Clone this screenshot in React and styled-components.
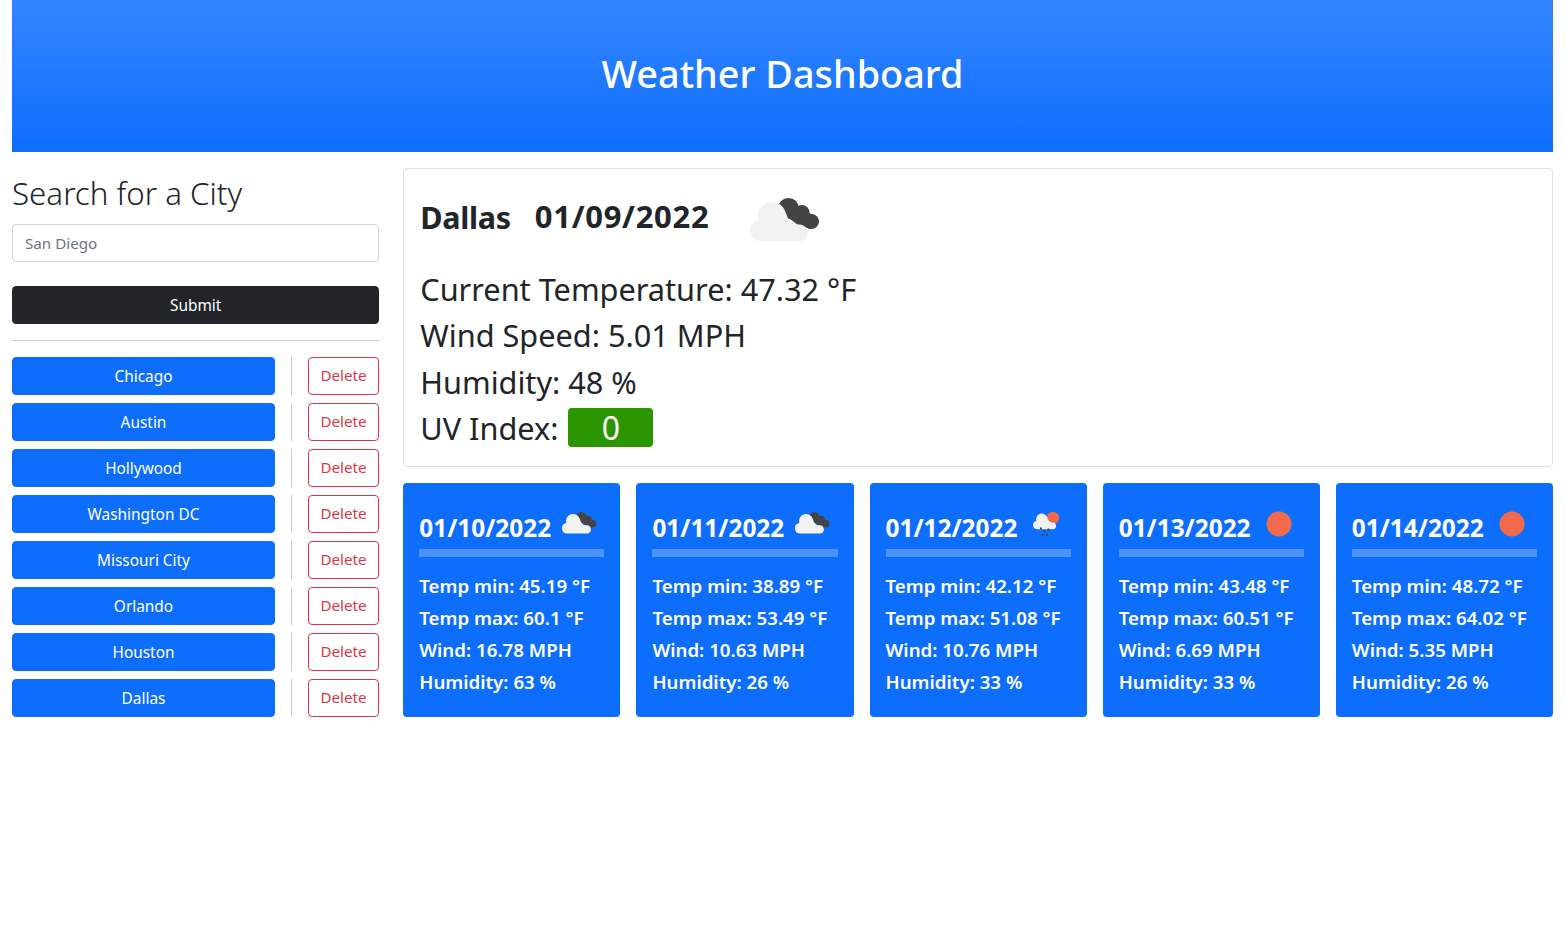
import React from "react";
import styled, { createGlobalStyle } from "styled-components";

const Global = createGlobalStyle`
  html, body { margin: 0; padding: 0; background: #fff; }
  body { font-family: "Noto Sans", "Open Sans", sans-serif; color: #212529; font-size: 16px; line-height: 1.5; }
  * { box-sizing: border-box; }
`;
const Page = styled.div`
  padding: 0 12px;
`;
const Header = styled.header`
  height: 152px;
  display: flex;
  align-items: center;
  justify-content: center;
  background: linear-gradient(#3385ff, #0d6efd);
  color: #fff;
`;
const Title = styled.h1`
  margin: 0 0 4px;
  font-size: 37.8px;
  font-weight: 500;
  line-height: 1.2;
`;
const Columns = styled.div`
  display: grid;
  grid-template-columns: 367.25px 1fr;
  gap: 24px;
  margin-top: 16px;
`;
const Sidebar = styled.aside`
  display: flex;
  flex-direction: column;
`;
const SearchTitle = styled.h2`
  margin: 0 0 16px;
  padding-top: 5px;
  font-size: 31.3px;
  font-weight: 300;
  line-height: 40px;
  height: 40px;
`;
const CityInput = styled.input`
  height: 38px;
  width: 100%;
  border: 1px solid #ced4da;
  border-radius: 4px;
  padding: 6px 12px;
  font: inherit;
  font-size: 15.2px;
  &::placeholder { color: #6c757d; opacity: 1; }
`;
const SubmitButton = styled.button`
  height: 38px;
  margin-top: 24px;
  padding: 2px 0 0;
  border: 1px solid #212529;
  border-radius: 4px;
  background: #212529;
  color: #fff;
  font: inherit;
  font-size: 15.4px;
`;
const Rule = styled.hr`
  width: 100%;
  margin: 16px 0;
  border: 0;
  border-top: 1px solid #c8c9ca;
`;
const CityList = styled.ul`
  list-style: none;
  margin: 0;
  padding: 0;
  display: flex;
  flex-direction: column;
  gap: 8px;
`;
const CityRow = styled.li`
  display: grid;
  grid-template-columns: 263px 1px 71px;
  column-gap: 16px;
`;
const CityButton = styled.button`
  height: 38px;
  padding: 2px 0 0;
  border: 1px solid #0d6efd;
  border-radius: 4px;
  background: #0d6efd;
  color: #fff;
  font: inherit;
  font-size: 15.4px;
`;
const VRule = styled.span`
  background: #c8c9ca;
`;
const DeleteButton = styled.button`
  height: 38px;
  padding: 0 0 2px;
  border: 1px solid #dc3545;
  border-radius: 4px;
  background: #fff;
  color: #dc3545;
  font: inherit;
  font-size: 15.2px;
`;
const Main = styled.main`
  display: flex;
  flex-direction: column;
  gap: 16px;
`;
const CurrentCard = styled.section`
  height: 299px;
  border: 1px solid #dfe1e5;
  border-radius: 4px;
  padding: 16px;
`;
const CurrentHead = styled.div`
  display: flex;
  align-items: center;
  height: 64px;
  margin-bottom: 17px;
`;
const CurrentCity = styled.h2`
  margin: 0 24px 0 0;
  font-size: 30.5px;
  font-weight: 700;
  line-height: 1.2;
  letter-spacing: -0.3px;
`;
const CurrentDate = styled.span`
  font-size: 31px;
  font-weight: 700;
  line-height: 1.2;
  letter-spacing: 0.7px;
`;
const BigIcon = styled.svg`
  width: 100px;
  height: 68px;
  margin-left: 25px;
`;
const Stat = styled.div`
  font-size: 30.7px;
  line-height: 46.3px;
  height: 46.3px;
  white-space: nowrap;
  display: flex;
  align-items: center;
`;
const UvBadge = styled.span`
  width: 85px;
  height: 39px;
  margin: -2px 0 0 10px;
  padding-top: 2px;
  border-radius: 4px;
  background: #2b9500;
  color: #fff;
  font-size: 32px;
  display: inline-flex;
  align-items: center;
  justify-content: center;
`;
const Forecast = styled.div`
  display: grid;
  grid-template-columns: repeat(5, 1fr);
  gap: 16px;
`;
const DayCard = styled.article`
  height: 234px;
  background: #0d6efd;
  color: #fff;
  border-radius: 4px;
  padding: 16px;
`;
const DayHead = styled.div`
  display: flex;
  align-items: flex-start;
  height: 50px;
`;
const DayDate = styled.h3`
  margin: 14px 0 0;
  font-size: 24.4px;
  font-weight: 700;
  line-height: 1.2;
  flex: none;
`;
const DayIcon = styled.svg`
  width: 50px;
  height: 50px;
  margin-left: 3px;
  flex: none;
`;
const DayBar = styled.div`
  height: 8px;
  background: #4d92fe;
`;
const DayLines = styled.div`
  margin-top: 13px;
`;
const DayLine = styled.div`
  font-size: 18.7px;
  font-weight: 600;
  line-height: 32px;
  white-space: nowrap;
`;

const CLOUD =
  "M10 43 A10.5 10.5 0 0 1 8.5 22.2 A14 14 0 0 1 35.5 14 Q37 20 41 24 Q44 27 50 26.5 A8.5 8.5 0 0 1 52 43 Z";

const CloudShape = ({ transform, dark }) => (
  <g transform={transform}>
    {dark && (
      <g fill="#444">
        <circle cx="38.5" cy="10.5" r="10.5" />
        <circle cx="52" cy="14.5" r="7.5" />
        <circle cx="61.5" cy="23.5" r="7.5" />
        <polygon points="32,12 50,8 66,20 60,31 48,27 36,18" />
      </g>
    )}
    <path d={CLOUD} fill="#f2f2f2" />
  </g>
);

const IconArt = ({ kind }) => {
  if (kind === "clear") return <circle cx="25" cy="25" r="12.5" fill="#f06a4b" />;
  if (kind === "rain")
    return (
      <>
        <circle cx="33" cy="19" r="6.2" fill="#f06a4b" />
        <CloudShape transform="translate(13 13) scale(0.4)" />
        <g fill="#444">
          <rect x="20" y="28.5" width="2" height="2" />
          <rect x="23.5" y="31.5" width="2" height="2" />
          <rect x="27.5" y="29.5" width="2" height="2" />
          <rect x="21.5" y="35" width="2" height="2" />
          <rect x="26" y="34.5" width="2" height="2" />
        </g>
      </>
    );
  return <CloudShape transform="translate(8 13) scale(0.5)" dark />;
};

const cities = ["Chicago", "Austin", "Hollywood", "Washington DC", "Missouri City", "Orlando", "Houston", "Dallas"];
const days = [
  { date: "01/10/2022", min: "45.19", max: "60.1", wind: "16.78", hum: 63, kind: "cloud" },
  { date: "01/11/2022", min: "38.89", max: "53.49", wind: "10.63", hum: 26, kind: "cloud" },
  { date: "01/12/2022", min: "42.12", max: "51.08", wind: "10.76", hum: 33, kind: "rain" },
  { date: "01/13/2022", min: "43.48", max: "60.51", wind: "6.69", hum: 33, kind: "clear" },
  { date: "01/14/2022", min: "48.72", max: "64.02", wind: "5.35", hum: 26, kind: "clear" },
];

export default function App() {
  return (
    <Page>
      <Global />
      <Header>
        <Title>Weather Dashboard</Title>
      </Header>
      <Columns>
        <Sidebar>
          <SearchTitle>Search for a City</SearchTitle>
          <CityInput placeholder="San Diego" />
          <SubmitButton>Submit</SubmitButton>
          <Rule />
          <CityList>
            {cities.map((c) => (
              <CityRow key={c}>
                <CityButton>{c}</CityButton>
                <VRule />
                <DeleteButton>Delete</DeleteButton>
              </CityRow>
            ))}
          </CityList>
        </Sidebar>
        <Main>
          <CurrentCard>
            <CurrentHead>
              <CurrentCity>Dallas</CurrentCity>
              <CurrentDate>01/09/2022</CurrentDate>
              <BigIcon viewBox="0 5.5 50 34">
                <IconArt kind="cloud" />
              </BigIcon>
            </CurrentHead>
            <Stat>Current Temperature: 47.32 °F</Stat>
            <Stat>Wind Speed: 5.01 MPH</Stat>
            <Stat>Humidity: 48 %</Stat>
            <Stat>
              UV Index: <UvBadge>0</UvBadge>
            </Stat>
          </CurrentCard>
          <Forecast>
            {days.map((d) => (
              <DayCard key={d.date}>
                <DayHead>
                  <DayDate>{d.date}</DayDate>
                  <DayIcon viewBox="0 0 50 50">
                    <IconArt kind={d.kind} />
                  </DayIcon>
                </DayHead>
                <DayBar />
                <DayLines>
                  <DayLine>Temp min: {d.min} °F</DayLine>
                  <DayLine>Temp max: {d.max} °F</DayLine>
                  <DayLine>Wind: {d.wind} MPH</DayLine>
                  <DayLine>Humidity: {d.hum} %</DayLine>
                </DayLines>
              </DayCard>
            ))}
          </Forecast>
        </Main>
      </Columns>
    </Page>
  );
}
